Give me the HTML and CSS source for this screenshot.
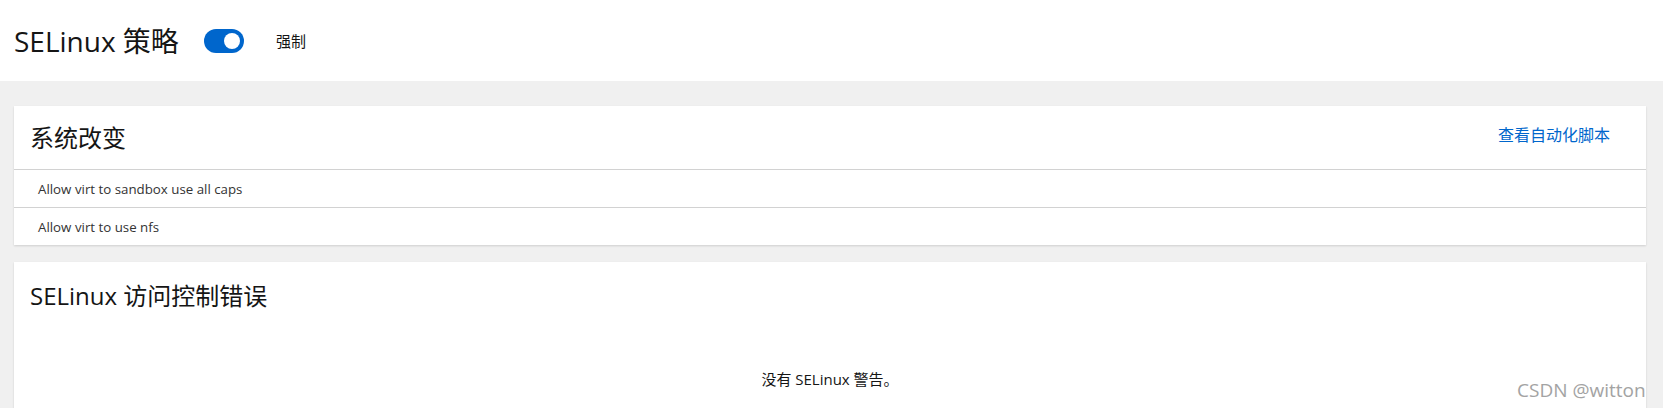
FILE: index.html
```html
<!DOCTYPE html>
<html lang="zh">
<head>
<meta charset="utf-8">
<title>SELinux 策略</title>
<link rel="stylesheet" href="styles.css">
</head>
<body>
<header class="page-header">
  <h1 class="page-title">SELinux 策略</h1>
  <span class="switch"><span class="knob"></span></span>
  <span class="switch-label">强制</span>
</header>
<main class="page-main">
  <section class="card">
    <div class="card-head">
      <h2 class="card-title">系统改变</h2>
      <a class="link" href="#">查看自动化脚本</a>
    </div>
    <ul class="mod-list">
      <li class="mod-row">Allow virt to sandbox use all caps</li>
      <li class="mod-row">Allow virt to use nfs</li>
    </ul>
  </section>
  <section class="card card-alerts">
    <div class="card-head card-head-plain">
      <h2 class="card-title">SELinux 访问控制错误</h2>
    </div>
    <p class="empty">没有 SELinux 警告。</p>
  </section>
</main>
<div class="watermark">CSDN @witton</div>
</body>
</html>
```
FILE: styles.css
```css
html, body {
  margin: 0;
  padding: 0;
}
body {
  background: #f0f0f0;
  font-family: "Open Sans", "Noto Sans CJK SC", sans-serif;
  color: #151515;
  height: 408px;
  overflow: hidden;
  position: relative;
}
.page-header {
  background: #fff;
  height: 81px;
  display: flex;
  align-items: center;
  padding-left: 14px;
}
.page-title {
  margin: 0;
  font-size: 28px;
  font-weight: 400;
  line-height: 1;
}
.switch {
  margin-left: 25px;
  width: 40px;
  height: 24px;
  border-radius: 12px;
  background: #0066cc;
  position: relative;
  flex: none;
}
.knob {
  position: absolute;
  right: 4px;
  top: 4px;
  width: 16px;
  height: 16px;
  border-radius: 50%;
  background: #fff;
}
.switch-label {
  margin-left: 32px;
  font-size: 15px;
}
.page-main {
  padding: 25px 17px 0 14px;
  display: flex;
  flex-direction: column;
  gap: 17px;
}
.card {
  background: #fff;
  box-shadow: 0 1px 2px rgba(0, 0, 0, 0.14);
}
.card-head {
  height: 63px;
  display: flex;
  align-items: center;
  justify-content: space-between;
  padding: 0 36px 0 16px;
  border-bottom: 1px solid #d2d2d2;
}
.card-head-plain {
  border-bottom: none;
  height: 68px;
}
.card-title {
  margin: 0;
  font-size: 24px;
  font-weight: 400;
  line-height: 1;
}
.link {
  color: #0066cc;
  text-decoration: none;
  font-size: 16px;
  margin-top: -8px;
}
.mod-list {
  list-style: none;
  margin: 0;
  padding: 0;
}
.mod-row {
  height: 37px;
  display: flex;
  align-items: center;
  padding-left: 24px;
  font-size: 13.3px;
  color: #333;
}
.mod-row + .mod-row {
  border-top: 1px solid #d2d2d2;
}
.card-alerts {
  height: 200px;
}
.empty {
  margin: 38px 0 0;
  text-align: center;
  font-size: 15px;
}
.watermark {
  position: absolute;
  left: 1517px;
  top: 377px;
  font-size: 19px;
  color: #a3a3a3;
  font-family: "Open Sans", sans-serif;
}
```
